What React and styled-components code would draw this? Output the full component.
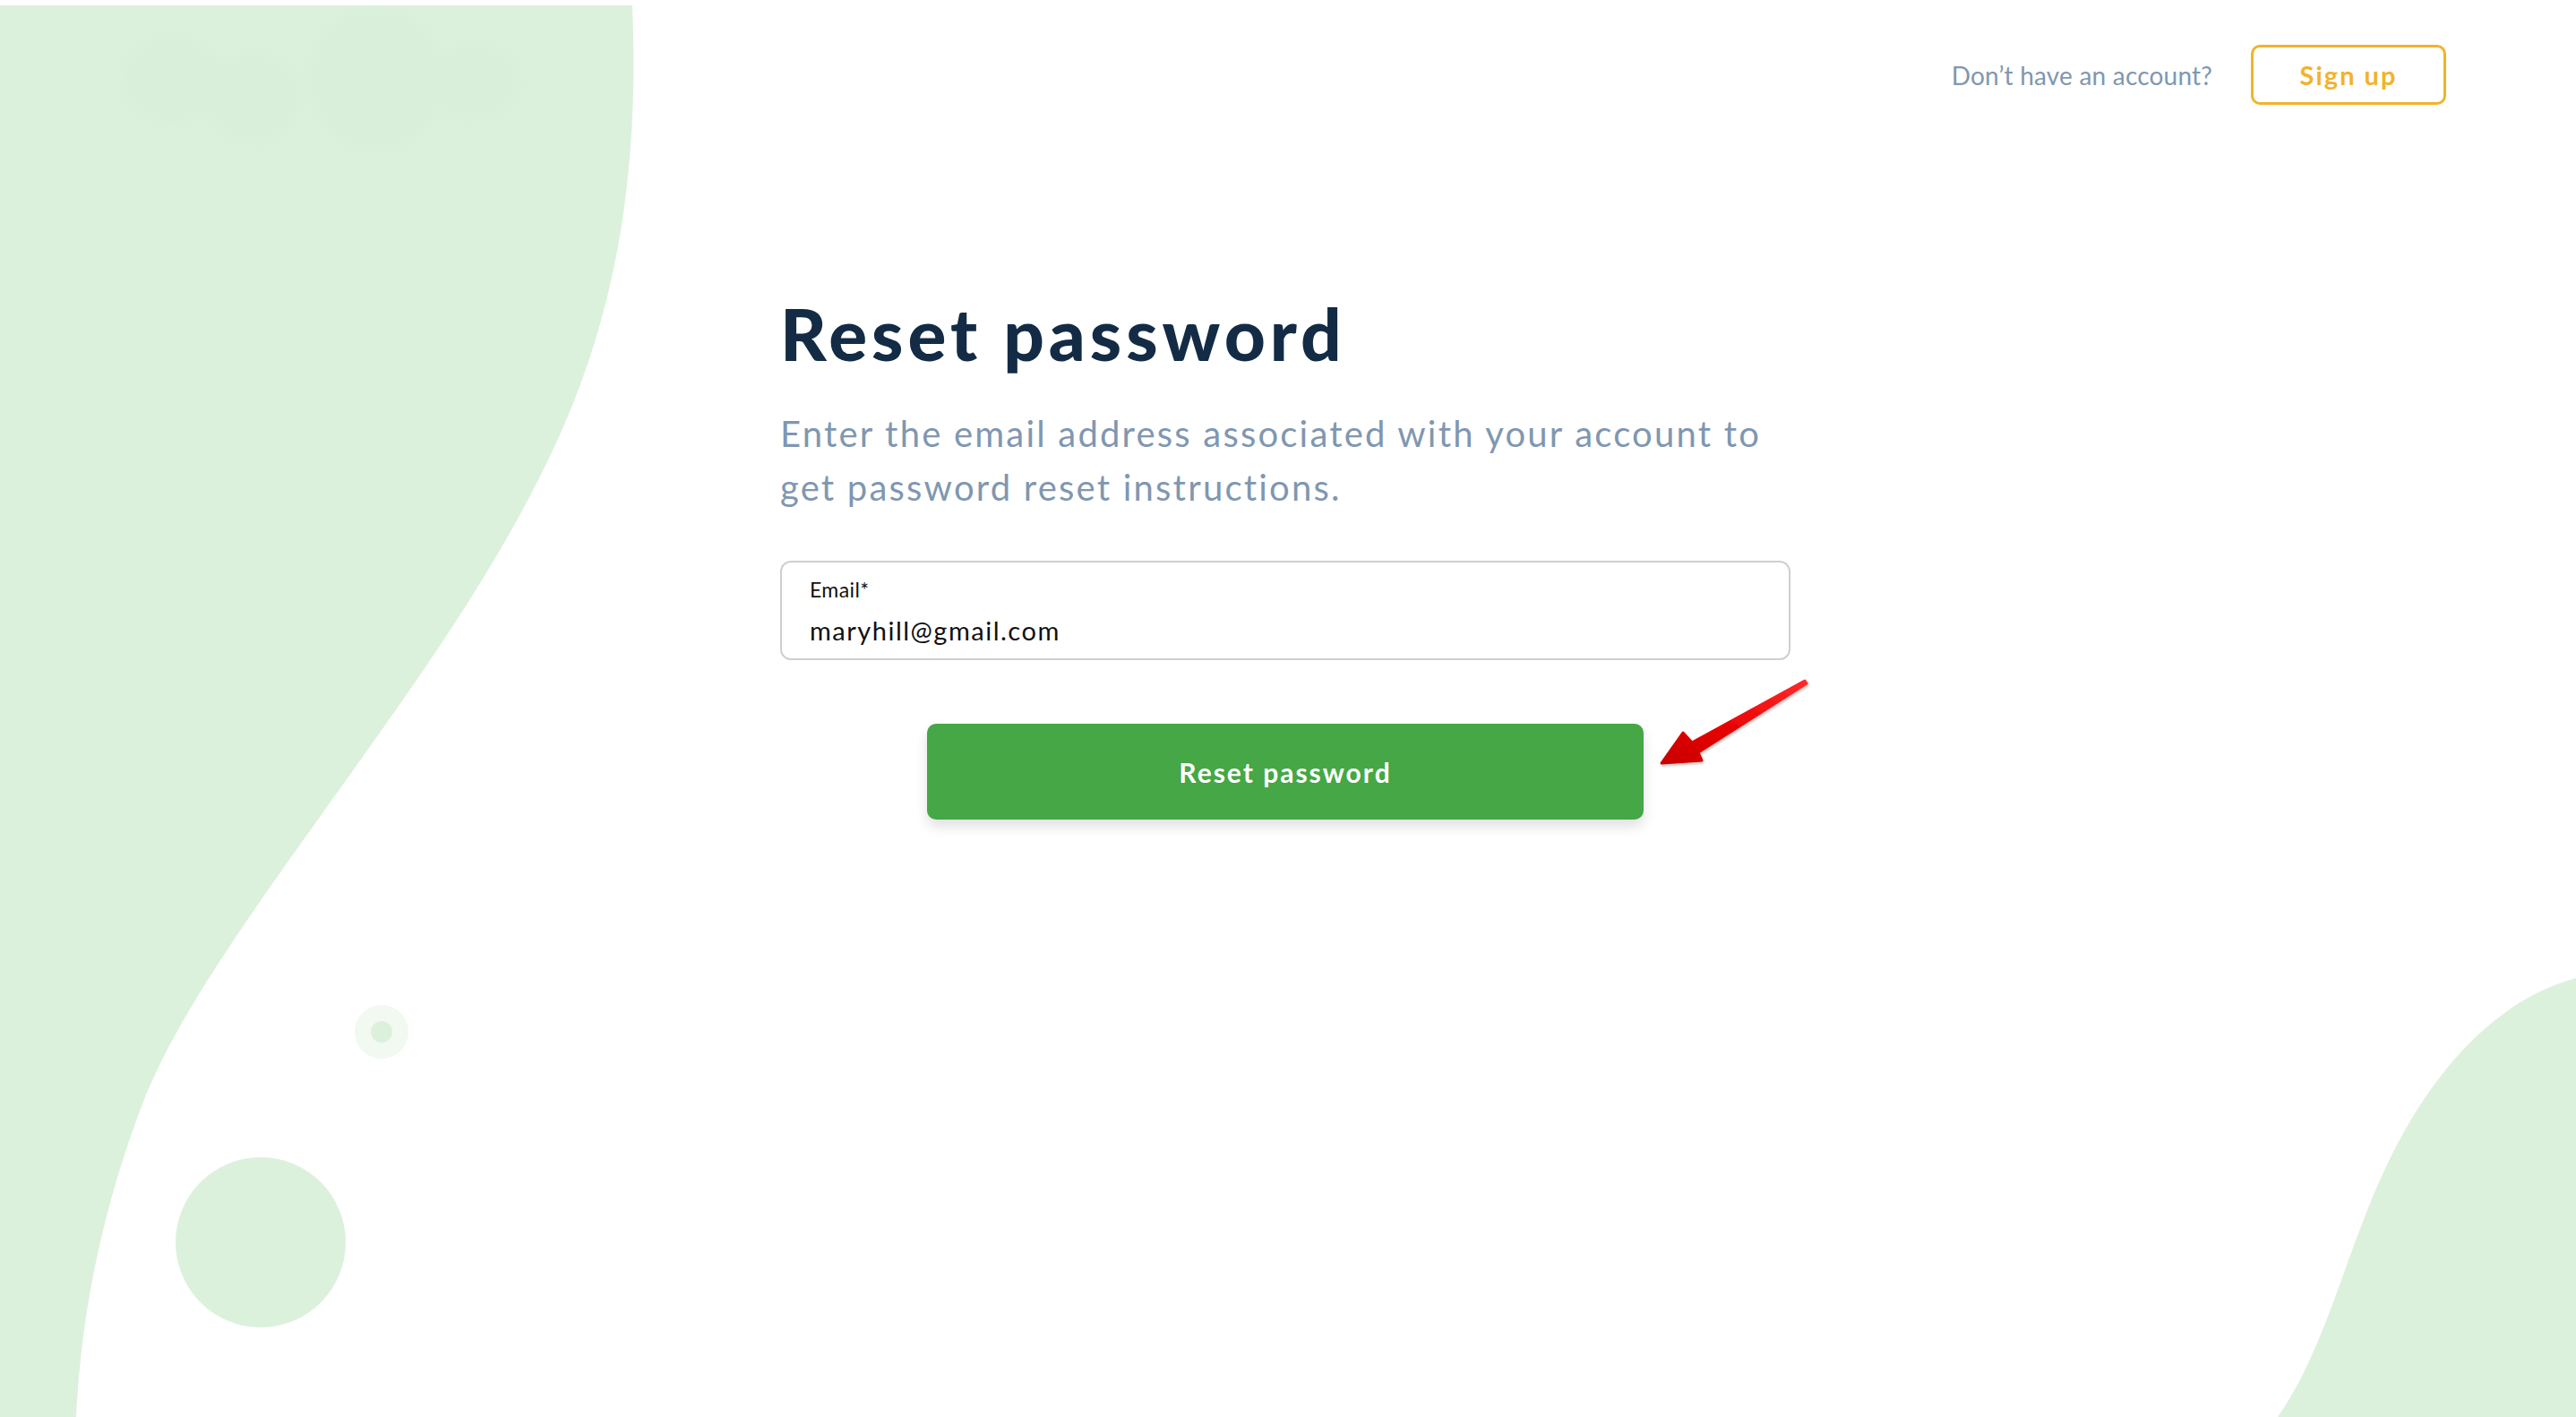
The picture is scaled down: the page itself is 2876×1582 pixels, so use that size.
import React from 'react';
import styled, { createGlobalStyle } from 'styled-components';

const BLOB = '#dcf1dc';
const NAVY = '#132b45';
const SLATE = '#7f97b1';
const AMBER = '#f1b32b';
const GREEN = '#45a745';

const GlobalStyle = createGlobalStyle`
  html, body {
    margin: 0;
    padding: 0;
    background: #ffffff;
  }
  body {
    font-family: Lato, "Open Sans", Arial, sans-serif;
    -webkit-font-smoothing: antialiased;
  }
  * {
    box-sizing: border-box;
  }
`;

const Backdrop = () => (
  <BackdropSvg viewBox="0 0 2876 1582" preserveAspectRatio="none" aria-hidden="true">
    <defs>
      <filter id="logoBlur" x="-20%" y="-20%" width="140%" height="140%">
        <feGaussianBlur stdDeviation="8" />
      </filter>
    </defs>
    <path
      d="M0,6 L706,6 C712,150 700,300 640,450 C580,600 480,740 380,880 C280,1020 200,1130 160,1230 C110,1360 90,1480 85,1582 L0,1582 Z"
      fill={BLOB}
    />
    {/* blurred-out logo */}
    <g fill="#d3ebd3" opacity="0.3" filter="url(#logoBlur)">
      <ellipse cx="192" cy="88" rx="54" ry="46" />
      <ellipse cx="283" cy="110" rx="50" ry="48" />
      <ellipse cx="420" cy="88" rx="72" ry="78" />
      <ellipse cx="530" cy="92" rx="48" ry="40" />
    </g>
    <path
      d="M2876,1092 C2790,1115 2720,1190 2670,1290 C2620,1390 2600,1500 2543,1582 L2876,1582 Z"
      fill={BLOB}
    />
    <circle cx="291" cy="1387" r="95" fill={BLOB} />
    <circle cx="426" cy="1152" r="30" fill="#f1f9f1" />
    <circle cx="426" cy="1152" r="12" fill={BLOB} />
  </BackdropSvg>
);

const PointerArrow = () => (
  <ArrowSvg viewBox="0 0 190 115" aria-hidden="true">
    <defs>
      <linearGradient id="arrowRed" x1="1" y1="0" x2="0" y2="1">
        <stop offset="0" stopColor="#ff2a2a" />
        <stop offset="0.6" stopColor="#e60000" />
        <stop offset="1" stopColor="#c80000" />
      </linearGradient>
      <filter id="arrowShadow" x="-20%" y="-20%" width="140%" height="140%">
        <feDropShadow dx="1" dy="2" stdDeviation="1.5" floodColor="#000" floodOpacity="0.25" />
      </filter>
    </defs>
    <polygon
      points="15,102 39,68 49,79 175,10 177,13 56,90 60,99"
      fill="url(#arrowRed)"
      stroke="url(#arrowRed)"
      strokeWidth="3"
      strokeLinejoin="round"
      filter="url(#arrowShadow)"
    />
  </ArrowSvg>
);

const App = () => (
  <Page>
    <GlobalStyle />
    <Backdrop />
    <Header>
      <HeaderPrompt>Don’t have an account?</HeaderPrompt>
      <OutlineButton type="button">Sign up</OutlineButton>
    </Header>
    <Main>
      <Form onSubmit={e => e.preventDefault()}>
        <Title>Reset password</Title>
        <Lead>
          Enter the email address associated with your account to
          <br />
          get password reset instructions.
        </Lead>
        <Field>
          <FieldLabel htmlFor="email">Email*</FieldLabel>
          <FieldInput id="email" type="email" defaultValue="maryhill@gmail.com" />
        </Field>
        <SubmitRow>
          <SubmitButton type="submit">Reset password</SubmitButton>
          <PointerArrow />
        </SubmitRow>
      </Form>
    </Main>
  </Page>
);

const Page = styled.div`
  position: relative;
  min-height: 100vh;
  overflow: hidden;
`;

const BackdropSvg = styled.svg`
  position: absolute;
  inset: 0;
  width: 2876px;
  height: 1582px;
  z-index: 0;
`;

const Header = styled.header`
  position: relative;
  z-index: 1;
  display: flex;
  justify-content: flex-end;
  align-items: center;
  gap: 43px;
  padding: 50px 145px 0 0;
`;

const HeaderPrompt = styled.span`
  font-size: 28px;
  color: ${SLATE};
  letter-spacing: 0.2px;
`;

const OutlineButton = styled.button`
  width: 218px;
  height: 67px;
  border: 3px solid ${AMBER};
  border-radius: 10px;
  background: transparent;
  color: ${AMBER};
  font-family: Lato, Arial, sans-serif;
  font-size: 29px;
  font-weight: 700;
  letter-spacing: 2px;
  cursor: pointer;
`;

const Main = styled.main`
  position: relative;
  z-index: 1;
  display: flex;
  justify-content: center;
  padding: 215px 6px 0 0;
`;

const Form = styled.form`
  width: 1128px;
  display: flex;
  flex-direction: column;
`;

const Title = styled.h1`
  margin: 0;
  font-size: 80px;
  line-height: 1;
  font-weight: 900;
  color: ${NAVY};
  letter-spacing: 5px;
`;

const Lead = styled.p`
  margin: 42px 0 0;
  font-size: 40px;
  line-height: 60px;
  font-weight: 400;
  color: ${SLATE};
  letter-spacing: 2.2px;
`;

const Field = styled.div`
  margin-top: 52px;
  height: 111px;
  display: flex;
  flex-direction: column;
  gap: 14px;
  padding: 17px 31px 0;
  border: 2px solid #cfcfcf;
  border-radius: 12px;
  background: #ffffff;
`;

const FieldLabel = styled.label`
  font-size: 23px;
  line-height: 1.2;
  color: #111111;
  letter-spacing: 0.4px;
`;

const FieldInput = styled.input`
  border: 0;
  outline: none;
  padding: 0;
  margin: 0;
  background: transparent;
  font-family: Lato, Arial, sans-serif;
  font-size: 29px;
  line-height: 1.2;
  color: #111111;
  letter-spacing: 1.5px;
`;

const SubmitRow = styled.div`
  position: relative;
  display: flex;
  justify-content: center;
  margin-top: 71px;
`;

const SubmitButton = styled.button`
  width: 800px;
  height: 107px;
  border: 0;
  border-radius: 10px;
  background: ${GREEN};
  color: #ffffff;
  font-family: Lato, Arial, sans-serif;
  font-size: 30px;
  font-weight: 700;
  letter-spacing: 2px;
  box-shadow: 0 8px 14px rgba(0, 0, 0, 0.12);
  cursor: pointer;
`;

const ArrowSvg = styled.svg`
  position: absolute;
  left: 969px;
  top: -58px;
  width: 190px;
  height: 115px;
`;

export default App;
